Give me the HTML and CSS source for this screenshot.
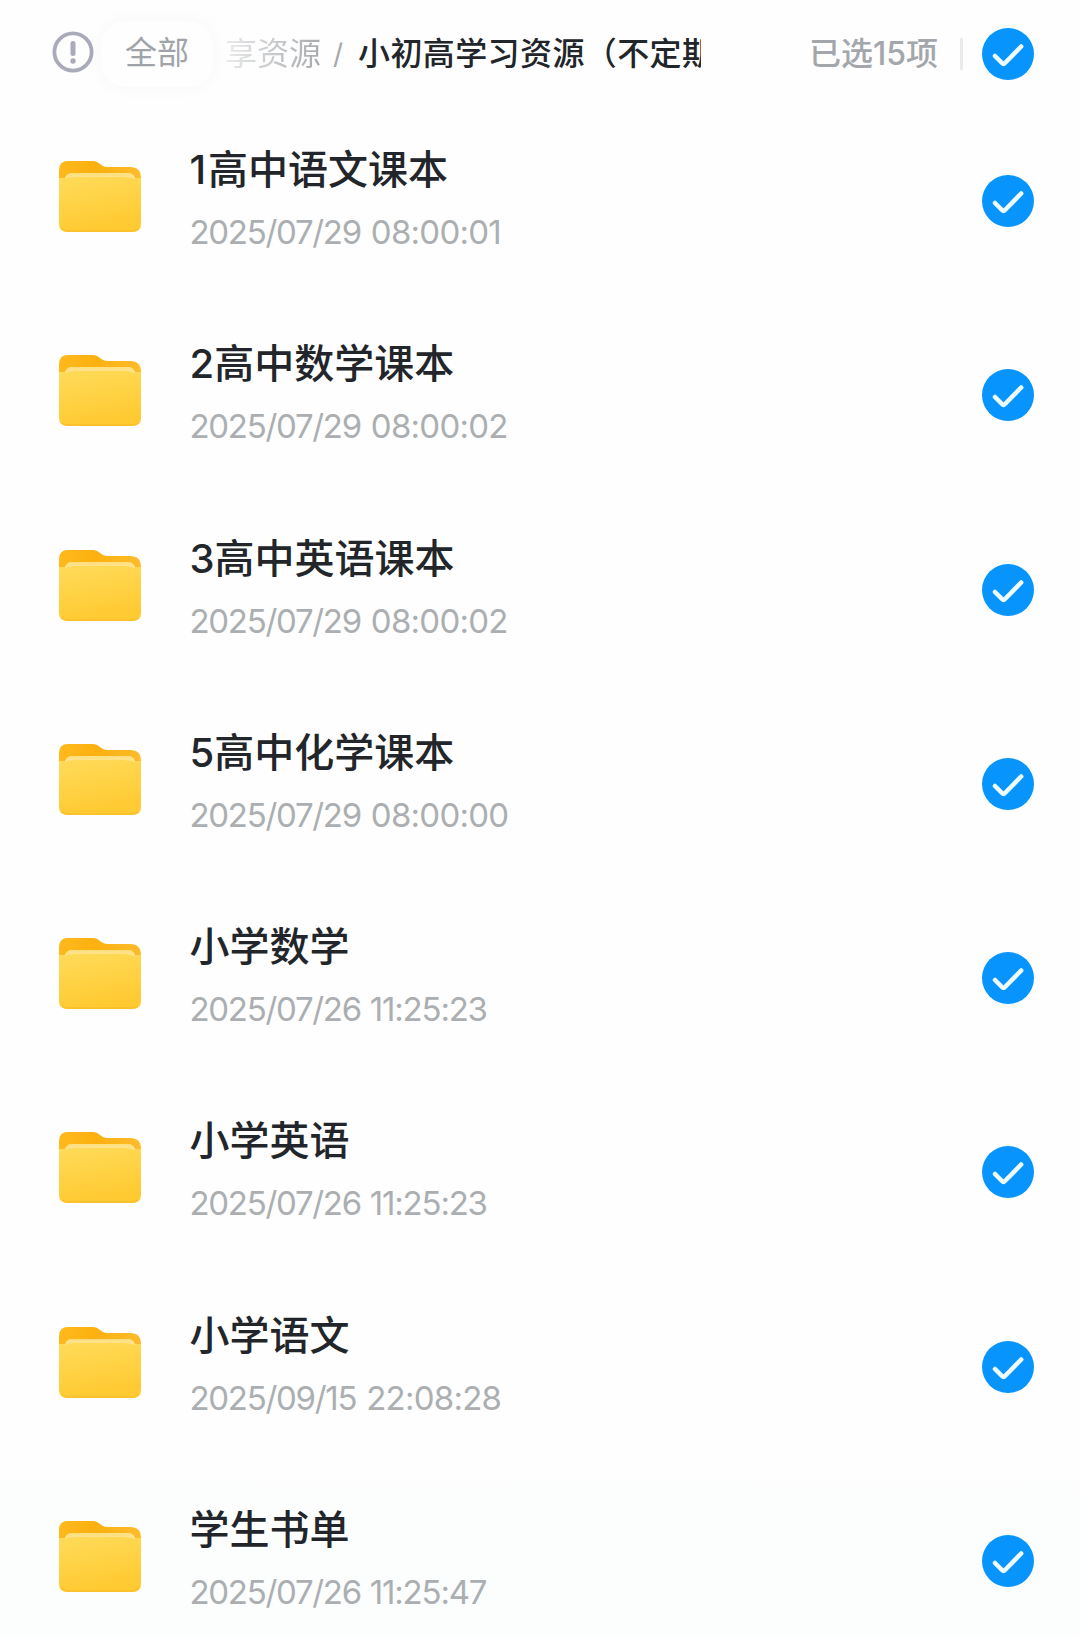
FILE: index.html
```html
<!DOCTYPE html>
<html lang="zh-CN">
<head>
<meta charset="UTF-8">
<title>小初高学习资源</title>
<link rel="stylesheet" href="styles.css">
</head>
<body>
<svg class="defs" width="0" height="0" aria-hidden="true">
  <defs>
    <linearGradient id="front" x1="0" y1="0" x2="0.25" y2="1"><stop offset="0" stop-color="#ffdc5c"/><stop offset="1" stop-color="#ffca32"/></linearGradient>
    <linearGradient id="back" x1="0" y1="0" x2="1" y2="0"><stop offset="0" stop-color="#ffb91c"/><stop offset=".45" stop-color="#fcb010"/><stop offset="1" stop-color="#fdbc2c"/></linearGradient>
    <linearGradient id="paper" x1="0" y1="0" x2="0" y2="1"><stop offset="0" stop-color="#ffdf80"/><stop offset="1" stop-color="#ffe590"/></linearGradient>
  </defs>
  <symbol id="folder" viewBox="0 0 82 72">
    <path fill="url(#back)" d="M0 9Q0 0 9 0H34Q38 0 41 3L44 5Q46 6 49 6H71Q82 6 82 17V30H0Z"/>
    <path fill="url(#front)" d="M0 17H6Q8 12 13 12H69Q74 12 76 17H82V63Q82 71 73 71H9Q0 71 0 63Z"/>
    <path fill="url(#paper)" d="M6 17Q8 12 13 12H69Q74 12 76 17V18Q70 16 64 16H16Q10 16 6 18Z"/>
    <path fill="none" stroke="#fbc02c" stroke-width="1.5" d="M3 68Q5 70 9 70H73Q77 70 79 68"/>
  </symbol>
  <symbol id="check" viewBox="0 0 52 52">
    <circle cx="26" cy="26" r="26" fill="#0795fd"/>
    <path d="M13 28L20 35Q21.5 36.5 23 35L39.2 18.5" fill="none" stroke="#effcff" stroke-width="4.5" stroke-linecap="round" stroke-linejoin="round"/>
  </symbol>
</svg>
<header class="header">
  <svg class="info" viewBox="0 0 42 42"><circle cx="21" cy="21" r="18.6" fill="none" stroke="#a9abba" stroke-width="3.8"/><path d="M21 12.5V22.5" stroke="#a9abba" stroke-width="5" stroke-linecap="round"/><circle cx="21" cy="30" r="2.7" fill="#a9abba"/></svg>
  <span class="all">全部</span>
  <nav class="crumbs"><span class="parent">享资源</span><span class="slash">/</span><span class="current">小初高学习资源（不定期</span></nav>
  <span class="count">已选15项</span>
  <span class="divider"></span>
  <svg class="check"><use href="#check"/></svg>
</header>
<main class="list">
  <div class="row"><svg class="folder"><use href="#folder"/></svg><div class="text"><div class="name"><span class="one">1</span>高中语文课本</div><div class="date">2025/07/29 <span class="time">08:00:01</span></div></div><svg class="check"><use href="#check"/></svg></div>
  <div class="row"><svg class="folder"><use href="#folder"/></svg><div class="text"><div class="name">2高中数学课本</div><div class="date">2025/07/29 <span class="time">08:00:02</span></div></div><svg class="check"><use href="#check"/></svg></div>
  <div class="row"><svg class="folder"><use href="#folder"/></svg><div class="text"><div class="name">3高中英语课本</div><div class="date">2025/07/29 <span class="time">08:00:02</span></div></div><svg class="check"><use href="#check"/></svg></div>
  <div class="row"><svg class="folder"><use href="#folder"/></svg><div class="text"><div class="name">5高中化学课本</div><div class="date">2025/07/29 <span class="time">08:00:00</span></div></div><svg class="check"><use href="#check"/></svg></div>
  <div class="row"><svg class="folder"><use href="#folder"/></svg><div class="text"><div class="name">小学数学</div><div class="date">2025/07/26 <span class="time narrow">11:25:23</span></div></div><svg class="check"><use href="#check"/></svg></div>
  <div class="row"><svg class="folder"><use href="#folder"/></svg><div class="text"><div class="name">小学英语</div><div class="date">2025/07/26 <span class="time narrow">11:25:23</span></div></div><svg class="check"><use href="#check"/></svg></div>
  <div class="row"><svg class="folder"><use href="#folder"/></svg><div class="text"><div class="name">小学语文</div><div class="date">2025/09/15 <span class="time">22:08:28</span></div></div><svg class="check"><use href="#check"/></svg></div>
  <div class="row"><svg class="folder"><use href="#folder"/></svg><div class="text"><div class="name">学生书单</div><div class="date">2025/07/26 <span class="time narrow">11:25:47</span></div></div><svg class="check"><use href="#check"/></svg></div>
</main>
</body>
</html>
```
FILE: styles.css
```css
* { box-sizing: border-box; }
body {
  margin: 0;
  height: 1636px;
  overflow: hidden;
  background: linear-gradient(#fefefe 1440px, #fcfdfd 1540px);
  font-family: Inter, "Noto Sans CJK SC", sans-serif;
  color: #22262a;
}
.defs { position: absolute; }
.header {
  display: flex;
  align-items: center;
  height: 107px;
  padding: 0 46px 0 52px;
  font-size: 32px;
  line-height: 48px;
  white-space: nowrap;
}
.info { width: 42px; height: 42px; margin-top: -3px; flex: none; }
.all {
  flex: none;
  width: 112px;
  height: 66px;
  margin: 0 0 0 7px;
  line-height: 64px;
  text-align: center;
  border-radius: 24px;
  background: #fefefe;
  box-shadow: 0 0 20px rgba(0, 0, 0, .03);
  color: #a0a4a8;
}
.crumbs {
  display: flex;
  width: 476px;
  margin-left: 12px;
  overflow: hidden;
}
.parent {
  flex: none;
  background: linear-gradient(90deg, #e9eaeb, #a7abae);
  background-clip: text;
  color: transparent;
}
.slash { flex: none; width: 37px; padding-right: 3px; text-align: center; color: #a4a8ab; font-size: 28px; }
.current { flex: none; font-weight: 500; letter-spacing: .4px; }
.count {
  margin-left: auto;
  font-weight: 500;
  color: #a3a7ab;
}
.divider { width: 3px; height: 32px; margin: 0 19px 0 22px; background: #e9eaec; }
.check { width: 52px; height: 52px; flex: none; }
.list { padding-top: 34px; }
.row {
  display: flex;
  height: 194.3px;
  padding: 0 46px 0 59px;
}
.folder { width: 82px; height: 72px; margin-top: 20px; flex: none; }
.text { flex: 1; margin-left: 48.5px; }
.name { height: 60px; padding-top: 1px; font-size: 40px; line-height: 56px; font-weight: 500; }
.one { margin-right: 2px; }
.date { font-size: 33px; line-height: 62px; color: #abafb1; letter-spacing: -1.3px; }
.time { margin-left: 2px; letter-spacing: -.75px; }
.narrow { margin-left: 1px; letter-spacing: -1.2px; }
.row .check { margin-top: 34px; }
```
